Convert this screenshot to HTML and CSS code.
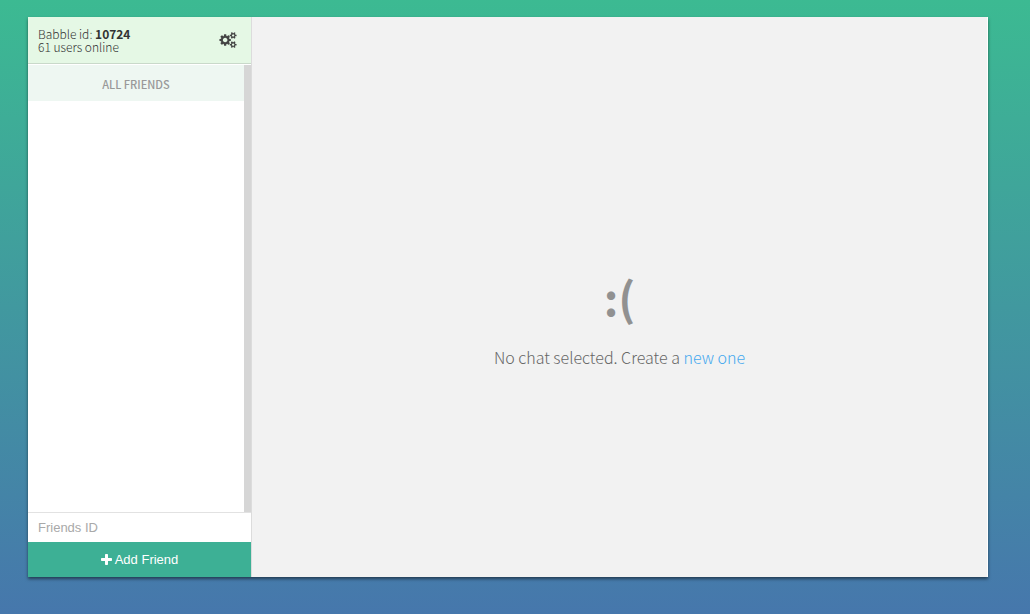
FILE: index.html
```
<!DOCTYPE html>
<html lang="en">
<head>
<meta charset="utf-8">
<title>Babble</title>
<link rel="stylesheet" href="styles.css">
</head>
<body>
<div class="app">
  <aside class="sidebar">
    <header class="profile">
      <div class="profile-text">
        <div>Babble id: <strong>10724</strong></div>
        <div>61 users online</div>
      </div>
      <button class="settings" type="button" aria-label="Settings">
        <svg class="cogs" viewBox="0 0 1920 1792" aria-hidden="true"><path d="M896 896q0-106-75-181t-181-75-181 75-75 181 75 181 181 75 181-75 75-181zm768 512q0-52-38-90t-90-38-90 38-38 90q0 53 37.500 90.500t90.500 37.500 90.500-37.500 37.500-90.500zm0-1024q0-52-38-90t-90-38-90 38-38 90q0 53 37.500 90.500t90.500 37.500 90.500-37.500 37.500-90.500zm-384 421v185q0 10-7 19.500t-16 10.500l-155 24q-11 35-32 76 34 48 90 115 7 11 7 20 0 12-7 19-23 30-82.500 89.500t-78.500 59.500q-11 0-21-7l-115-90q-37 19-77 31-11 108-23 155-7 24-30 24h-186q-11 0-20-7.500t-10-17.500l-23-153q-34-10-75-31l-118 89q-7 7-20 7-11 0-21-8-144-133-144-160 0-9 7-19 10-14 41-53t47-61q-23-44-35-82l-152-24q-10-1-17-9.500t-7-19.500v-185q0-10 7-19.500t16-10.500l155-24q11-35 32-76-34-48-90-115-7-11-7-20 0-12 7-20 22-30 82-89t79-59q11 0 21 7l115 90q34-18 77-32 11-108 23-154 7-24 30-24h186q11 0 20 7.500t10 17.500l23 153q34 10 75 31l118-89q8-7 20-7 11 0 21 8 144 133 144 160 0 8-7 19-12 16-42 54t-45 60q23 48 34 82l152 23q10 2 17 10.500t7 19.500zm640 533v140q0 16-149 31-12 27-30 52 51 113 51 138 0 4-4 7-122 71-124 71-8 0-46-47t-52-68q-20 2-30 2t-30-2q-14 21-52 68t-46 47q-2 0-124-71-4-3-4-7 0-25 51-138-18-25-30-52-149-15-149-31v-140q0-16 149-31 13-29 30-52-51-113-51-138 0-4 4-7 4-2 35-20t59-34 30-16q8 0 46 46.500t52 67.500q20-2 30-2t30 2q51-71 92-112l6-2q4 0 124 70 4 3 4 7 0 25-51 138 17 23 30 52 149 15 149 31zm0-1024v140q0 16-149 31-12 27-30 52 51 113 51 138 0 4-4 7-122 71-124 71-8 0-46-47t-52-68q-20 2-30 2t-30-2q-14 21-52 68t-46 47q-2 0-124-71-4-3-4-7 0-25 51-138-18-25-30-52-149-15-149-31v-140q0-16 149-31 13-29 30-52-51-113-51-138 0-4 4-7 4-2 35-20t59-34 30-16q8 0 46 46.500t52 67.500q20-2 30-2t30 2q51-71 92-112l6-2q4 0 124 70 4 3 4 7 0 25-51 138 17 23 30 52 149 15 149 31z"/></svg>
      </button>
    </header>
    <div class="friends">
      <h2 class="friends-title">ALL FRIENDS</h2>
    </div>
    <form class="add-friend">
      <input class="friend-id" type="text" placeholder="Friends ID" aria-label="Friends ID">
      <button class="add-button" type="button">
        <svg class="plus" viewBox="0 0 11 11" aria-hidden="true"><path d="M4.800 0h1.400q.8 0 .8.800V4h3.200q.8 0 .8.800v1.400q0 .8-.8.800H7v3.200q0 .8-.8.800H4.800q-.8 0-.8-.8V7H.8Q0 7 0 6.200V4.800Q0 4 .8 4H4V.8Q4 0 4.800 0z"/></svg>
        <span>Add Friend</span>
      </button>
    </form>
  </aside>
  <main class="chat">
    <div class="sad-face">:(</div>
    <p class="empty-text">No chat selected. Create a <a href="#new">new one</a></p>
  </main>
</div>
</body>
</html>
```
FILE: styles.css
```
* {
  box-sizing: border-box;
}

body {
  display: flex;
  min-height: 100vh;
  margin: 0;
  padding: 17px 42px 37px 28px;
  background: linear-gradient(#3cba92, #4677ac);
  color: #333;
  font-family: "Source Sans Pro", "Noto Sans CJK SC", "Noto Sans", sans-serif;
  font-weight: 300;
}

.app {
  display: flex;
  flex: 1;
  background: #fff;
  box-shadow: 0 2px 3px rgba(0, 0, 0, 0.5);
}

.sidebar {
  display: flex;
  flex-direction: column;
  width: 224px;
  border-right: 1px solid #dcdcdc;
}

.profile {
  display: flex;
  align-items: center;
  justify-content: space-between;
  height: 47px;
  margin-bottom: 1px;
  padding: 0 14px 0 10px;
  border-bottom: 1px solid #c9d9ca;
  background: #e5f8e5;
}

.profile-text {
  font-size: 12px;
  line-height: 13px;
}

.profile-text strong {
  font-weight: 600;
}

.settings {
  display: flex;
  padding: 0;
  border: 0;
  background: none;
  cursor: pointer;
}

.cogs {
  width: 18px;
  height: 16px;
  fill: #444;
}

.friends {
  flex: 1;
  border-right: 7px solid #d6d6d6;
}

.friends-title {
  margin: 0;
  padding-top: 3px;
  background: #eef7f2;
  color: #999;
  font-size: 11px;
  font-weight: 500;
  line-height: 33px;
  text-align: center;
}

.add-friend {
  display: flex;
  flex-direction: column;
  border-top: 1px solid #e2e2e2;
}

.friend-id {
  height: 29px;
  padding: 0 10px;
  border: 0;
  outline: 0;
  background: #fff;
  color: #333;
  font: 13px "Liberation Sans", Arial, sans-serif;
}

.friend-id::placeholder {
  color: #a9a9a9;
}

.add-button {
  display: flex;
  align-items: center;
  justify-content: center;
  gap: 3px;
  height: 35px;
  border: 0;
  background: #3db095;
  color: #fff;
  font: 13px "Liberation Sans", Arial, sans-serif;
  cursor: pointer;
}

.plus {
  width: 11px;
  height: 11px;
  fill: #fff;
}

.chat {
  display: flex;
  flex: 1;
  flex-direction: column;
  align-items: center;
  justify-content: center;
  gap: 20px;
  margin-right: 1px;
  padding-top: 44px;
  background: #f2f2f2;
}

.sad-face {
  color: #919191;
  font-size: 45px;
  font-weight: 600;
  line-height: 56px;
}

.empty-text {
  margin: 0;
  color: #666;
  font-size: 16px;
  line-height: 24px;
}

.empty-text a {
  color: #45a9ef;
  text-decoration: none;
}
```
